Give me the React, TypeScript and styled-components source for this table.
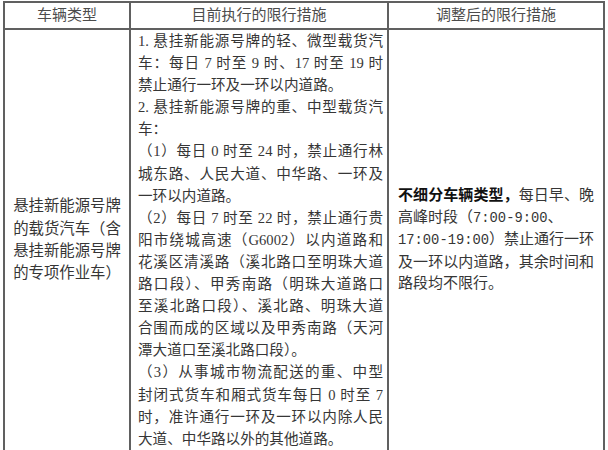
import React from 'react';
import styled, { createGlobalStyle } from 'styled-components';

const GlobalStyle = createGlobalStyle`
  html, body {
    margin: 0;
    padding: 0;
    background: #ffffff;
  }
  body {
    font-family: "Liberation Serif", "Noto Sans CJK SC", sans-serif;
    color: #363636;
  }
`;

const Table = styled.table`
  border-collapse: collapse;
  table-layout: fixed;
  width: 600px;
  margin: 1px 0 0 3px;
`;

const HeadCell = styled.th`
  border: 2px solid #606060;
  height: 25px;
  padding: 0;
  font-weight: 400;
  font-size: 15px;
  line-height: 23px;
  color: #4c4c4c;
  text-align: center;
`;

const Cell = styled.td<{ $pl: number; $pr: number }>`
  border: 2px solid #606060;
  padding: 0 ${({ $pr }) => $pr}px 0 ${({ $pl }) => $pl}px;
  vertical-align: middle;
`;

const Block = styled.div<{ $size: number; $lh: number }>`
  font-size: ${({ $size }) => $size}px;
  line-height: ${({ $lh }) => $lh}px;
`;

const Line = styled.div<{ $justify?: boolean; $center?: boolean }>`
  white-space: nowrap;
  text-align: ${({ $justify, $center }) => ($justify ? 'justify' : $center ? 'center' : 'left')};
  text-align-last: ${({ $justify, $center }) => ($justify ? 'justify' : $center ? 'center' : 'left')};
`;

const Strong = styled.span`
  font-weight: 700;
  color: #111111;
`;

const Num = styled.span`
  font-family: "Liberation Mono", monospace;
  font-size: 13.8px;
`;

const vehicleLines = ['悬挂新能源号牌', '的载货汽车（含', '悬挂新能源号牌', '的专项作业车）'];

const currentLines: Array<[string, boolean]> = [
  ['1. 悬挂新能源号牌的轻、微型载货汽', true],
  ['车：每日 7 时至 9 时、17 时至 19 时', true],
  ['禁止通行一环及一环以内道路。', false],
  ['2. 悬挂新能源号牌的重、中型载货汽', true],
  ['车：', false],
  ['（1）每日 0 时至 24 时，禁止通行林', true],
  ['城东路、人民大道、中华路、一环及', true],
  ['一环以内道路。', false],
  ['（2）每日 7 时至 22 时，禁止通行贵', true],
  ['阳市绕城高速（G6002）以内道路和', true],
  ['花溪区清溪路（溪北路口至明珠大道', true],
  ['路口段）、甲秀南路（明珠大道路口', true],
  ['至溪北路口段）、溪北路、明珠大道', true],
  ['合围而成的区域以及甲秀南路（天河', true],
  ['潭大道口至溪北路口段）。', false],
  ['（3）从事城市物流配送的重、中型', true],
  ['封闭式货车和厢式货车每日 0 时至 7', true],
  ['时，准许通行一环及一环以内除人民', true],
  ['大道、中华路以外的其他道路。', false],
];

const App: React.FC = () => {
  return (
    <>
      <GlobalStyle />
      <Table>
        <colgroup>
          <col style={{ width: 126 }} />
          <col style={{ width: 258 }} />
          <col style={{ width: 216 }} />
        </colgroup>
        <thead>
          <tr>
            <HeadCell>车辆类型</HeadCell>
            <HeadCell>目前执行的限行措施</HeadCell>
            <HeadCell>调整后的限行措施</HeadCell>
          </tr>
        </thead>
        <tbody>
          <tr>
            <Cell $pl={7} $pr={7}>
              <Block $size={15.4} $lh={22.2}>
                {vehicleLines.map((text, i) => (
                  <Line key={i} $center>
                    {text}
                  </Line>
                ))}
              </Block>
            </Cell>
            <Cell $pl={7} $pr={4}>
              <Block $size={14.6} $lh={22.1}>
                {currentLines.map(([text, justify], i) => (
                  <Line key={i} $justify={justify}>
                    {text}
                  </Line>
                ))}
              </Block>
            </Cell>
            <Cell $pl={9} $pr={9}>
              <Block $size={15} $lh={21.6}>
                <Line $justify>
                  <Strong>不细分车辆类型，</Strong>每日早、晚
                </Line>
                <Line>
                  高峰时段（<Num>7:00-9:00</Num>、
                </Line>
                <Line $justify>
                  <Num>17:00-19:00</Num>）禁止通行一环
                </Line>
                <Line $justify>及一环以内道路，其余时间和</Line>
                <Line>路段均不限行。</Line>
              </Block>
            </Cell>
          </tr>
        </tbody>
      </Table>
    </>
  );
};

export default App;
